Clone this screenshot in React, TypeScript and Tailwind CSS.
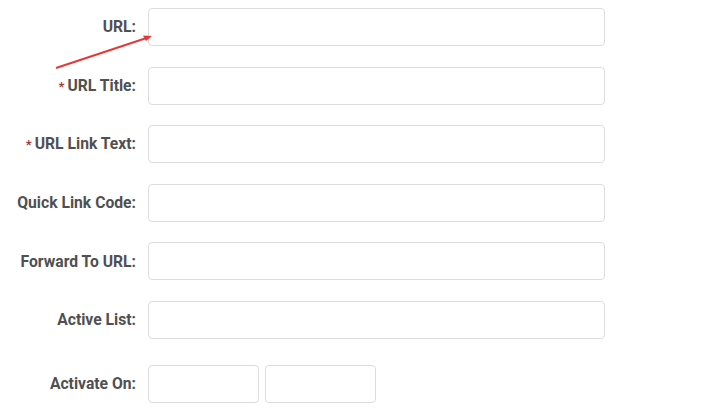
const rows = [
  { label: "URL:", req: false },
  { label: "URL Title:", req: true },
  { label: "URL Link Text:", req: true },
  { label: "Quick Link Code:", req: false },
  { label: "Forward To URL:", req: false },
  { label: "Active List:", req: false },
]

function Label({ text, req }: { text: string; req?: boolean }) {
  return (
    <div className="w-[136px] shrink-0 text-right text-[15.7px] font-bold text-[#505050]">
      {req && <span className="mr-[3px] text-[13px] text-[#9b3b3b]">*</span>}
      {text}
    </div>
  )
}

export default function App() {
  return (
    <div className="relative h-[414px] w-[723px] bg-white" style={{ fontFamily: "Roboto, 'Liberation Sans', sans-serif" }}>
      <div className="flex flex-col gap-[20.6px] pt-[8px]">
        {rows.map((r) => (
          <div key={r.label} className="flex items-center gap-[12px]">
            <Label text={r.label} req={r.req} />
            <input className="h-[38px] w-[457px] rounded-[4px] border border-[#dcdcdc] bg-white" />
          </div>
        ))}
      </div>
      <div className="mt-[26px] flex items-center gap-[12px]">
        <Label text="Activate On:" />
        <div className="flex gap-[6px]">
          <input className="h-[38px] w-[111px] rounded-[4px] border border-[#dcdcdc] bg-white" />
          <input className="h-[38px] w-[111px] rounded-[4px] border border-[#dcdcdc] bg-white" />
        </div>
      </div>
      <svg className="absolute left-0 top-0" width="200" height="100">
        <line x1="56" y1="68" x2="148" y2="37.5" stroke="#e53935" strokeWidth="2" />
        <path d="M152 36 L143 35.5 L146 41 Z" fill="#e53935" />
      </svg>
    </div>
  )
}
